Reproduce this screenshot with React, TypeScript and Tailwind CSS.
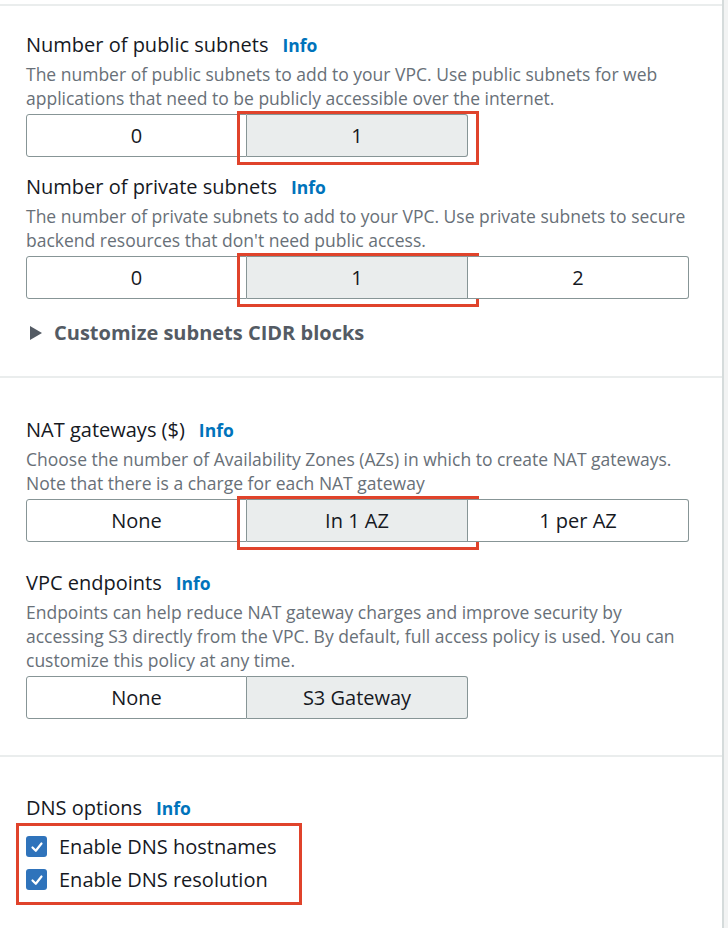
import React from "react";

const font = { fontFamily: '"Open Sans", "Liberation Sans", sans-serif' };

function Info() {
  return <span className="ml-[14px] text-[17.5px] font-bold text-[#0073bb]">Info</span>;
}

function Label({ text }: { text: string }) {
  return (
    <div className="flex items-baseline text-[20px] leading-[26px] text-[#16191f]">
      <span>{text}</span>
      <Info />
    </div>
  );
}

function Desc({ children }: { children: React.ReactNode }) {
  return <p className="mt-[4px] w-[676px] text-[17.5px] leading-[24px] text-[#687078]">{children}</p>;
}

function Segmented({
  options,
  selected,
  highlight,
}: {
  options: string[];
  selected: number;
  highlight?: boolean;
}) {
  return (
    <div className="mt-[4px] flex">
      {options.map((o, i) => {
        const sel = i === selected;
        return (
          <div
            key={o}
            className={
              "relative flex h-[43px] w-[221px] items-center justify-center border-y border-[#879596] text-[20px] leading-[26px] text-[#16191f] " +
              (i === 0 ? "rounded-l-[3px] border-l " : "") +
              (i === options.length - 1 ? "rounded-r-[3px] border-r " : "border-r ") +
              (sel ? "bg-[#eaeded]" : "bg-white")
            }
          >
            {o}
            {sel && highlight && (
              <div className="absolute -top-[4px] -bottom-[9px] -left-[10px] -right-[12px] border-[3px] border-[#e0432b]" />
            )}
          </div>
        );
      })}
    </div>
  );
}

function Check({ label }: { label: string }) {
  return (
    <div className="flex h-[33px] items-center">
      <span className="flex h-[21px] w-[21px] items-center justify-center rounded-[3px] bg-[#2f73bb]">
        <svg width="14" height="14" viewBox="0 0 14 14" fill="none">
          <path d="M2.5 7.5 L5.8 10.8 L11.5 3.5" stroke="white" strokeWidth="2.2" strokeLinecap="round" strokeLinejoin="round" />
        </svg>
      </span>
      <span className="ml-[12px] text-[20px] leading-[26px] text-[#16191f]">{label}</span>
    </div>
  );
}

export default function App() {
  return (
    <div className="flex min-h-[928px] bg-[#f2f3f3]" style={font}>
      <div className="w-[724px] border-r-2 border-[#d5dbdb] bg-white">
        <div className="mt-[4px] border-t-2 border-[#eaeded] pl-[26px] pt-[26px]">
          <Label text="Number of public subnets" />
          <Desc>
            The number of public subnets to add to your VPC. Use public subnets for web applications that need to be
            publicly accessible over the internet.
          </Desc>
          <Segmented options={["0", "1"]} selected={1} highlight />

          <div className="mt-[17px]">
            <Label text="Number of private subnets" />
          </div>
          <Desc>
            The number of private subnets to add to your VPC. Use private subnets to secure backend resources that
            don't need public access.
          </Desc>
          <Segmented options={["0", "1", "2"]} selected={1} highlight />

          <div className="mt-[21px] flex items-center text-[20px] font-bold leading-[26px] text-[#545b64]">
            <svg width="14" height="16" viewBox="0 0 14 16" className="ml-[3px] mr-[11px]">
              <path d="M1 1 L13 8 L1 15 Z" fill="#545b64" />
            </svg>
            Customize subnets CIDR blocks
          </div>
          <div className="h-[30px]" />
        </div>

        <div className="border-t-2 border-[#eaeded] pl-[26px] pt-[39px]">
          <Label text="NAT gateways ($)" />
          <Desc>
            Choose the number of Availability Zones (AZs) in which to create NAT gateways. Note that there is a charge
            for each NAT gateway
          </Desc>
          <Segmented options={["None", "In 1 AZ", "1 per AZ"]} selected={1} highlight />

          <div className="mt-[28px]">
            <Label text="VPC endpoints" />
          </div>
          <Desc>
            Endpoints can help reduce NAT gateway charges and improve security by accessing S3 directly from the VPC. By
            default, full access policy is used. You can customize this policy at any time.
          </Desc>
          <div className="mt-[3px]">
            <Segmented options={["None", "S3 Gateway"]} selected={1} />
          </div>
          <div className="h-[36px]" />
        </div>

        <div className="border-t-2 border-[#eaeded] pl-[26px] pt-[38px]">
          <Label text="DNS options" />
          <div className="relative mt-[9px] w-fit pr-[25px]">
            <Check label="Enable DNS hostnames" />
            <Check label="Enable DNS resolution" />
            <div className="absolute -top-[7px] -bottom-[9px] -left-[10px] right-0 border-[3px] border-[#e0432b]" />
          </div>
        </div>
      </div>
    </div>
  );
}
